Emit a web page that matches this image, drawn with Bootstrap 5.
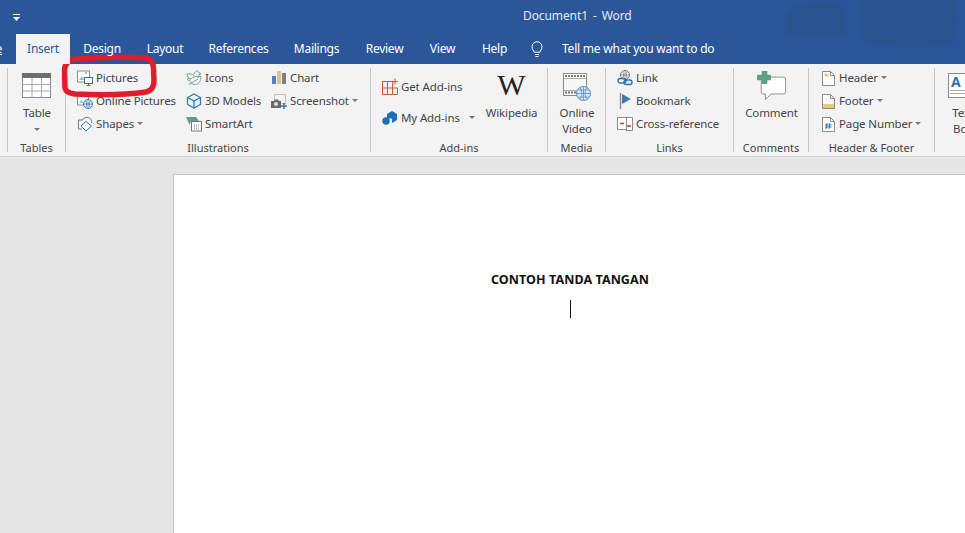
<!DOCTYPE html>
<html lang="en"><head><meta charset="utf-8"><title>Document1 - Word</title>
<link href="https://cdn.jsdelivr.net/npm/bootstrap@5.3.0/dist/css/bootstrap.min.css" rel="stylesheet">
<style>
html,body{height:100%;overflow:hidden}
body{font-family:"Noto Sans","Open Sans",sans-serif;font-size:11.5px;letter-spacing:-.13px;color:#444;background:#e6e6e6}
.wd-app{width:965px;height:533px}
.wd-title{height:34px;background:#2b579a;color:#e4e9f2;position:relative}
.wd-blot{right:0;top:0;width:190px;height:64px;z-index:1;filter:blur(2px)}
.wd-qat{width:33px;height:34px}
.wd-doc-name{margin-left:490px;line-height:31px;font-size:12px;word-spacing:2px;letter-spacing:-.1px;white-space:nowrap}
.wd-tabs{height:30px;flex-wrap:nowrap;position:relative;z-index:2}
.wd-tabbar{background:#2b579a}
.wd-tab{display:block;padding:0;text-align:center;line-height:30px;color:#fff;white-space:nowrap;font-size:12px;letter-spacing:-.25px}
.wd-tab:hover{color:#fff}
.wd-tab.active{background:#f3f3f3;color:#2b579a}
.t-home{width:16px;display:flex;justify-content:flex-end;padding-right:14px}
.t-ins{width:54px}.t-des{width:64px}.t-lay{width:62px}.t-ref{width:85px}.t-mai{width:71px}.t-rev{width:65px}.t-vie{width:51px}.t-hel{width:53px}
.t-tell{margin-left:8px;gap:17px;line-height:30px;color:#fff;white-space:nowrap;font-size:12px;letter-spacing:-.22px}
.wd-ribbon{height:92px;background:#f3f3f3;flex-wrap:nowrap}
.rb-group{height:92px;position:relative;flex:none}
.rb-group::after{content:"";position:absolute;right:0;top:4px;bottom:4px;width:1px;background:#c6c6c6}
.rb-group:last-child::after{display:none}
.g0{width:8px}.g1{width:58px}.g2{width:305px}.g3{width:177px}.g4{width:58px}.g5{width:128px}.g6{width:75px}.g7{width:126px}.g8{width:56px}
.rb-body{height:76px;padding-top:2px}
.rb-label{height:16px;line-height:16px;text-align:center;white-space:nowrap;padding-right:1px;font-size:11px;letter-spacing:0}
.pl-rb{padding-left:11px}.pl-hf{padding-left:13px}
.rb-row{height:23px;gap:3px;white-space:nowrap}
.pl-hf .rb-row{gap:4px}
.rb-row svg{flex:none}
.rb-tall{height:31px}
.rb-pad5{padding-top:5px}
.c1{width:109px}.c2{width:85px}.c3{width:103px}.c4{width:53px}
.rb-big{text-align:center;line-height:16px;white-space:nowrap}
.rb-bigicon{height:39px}
.rb-caret{display:inline-block;width:0;height:0;border:3px solid transparent;border-top-color:#777;border-bottom:0;margin-left:3px;flex:none}
.rb-caret-my{margin-left:9px}
.rb-caret-table{margin:7px 0 0}
.rb-wiki{font-family:"Liberation Serif",serif;font-size:30px;line-height:38px;color:#222;letter-spacing:0}
.wd-sub{height:18px;background:#e6e6e6;border-top:1px solid #d2d2d2}
.wd-canvas{height:359px;padding-left:173px;background:#e6e6e6}
.wd-page{width:793px;height:100%;background:#fff;border:1px solid #c8c8c8;border-width:1px 0 0 1px;flex:none;padding-top:96px;text-align:center;color:#111}
.wd-heading{font-weight:700;font-size:12.5px;line-height:18px;margin:0;letter-spacing:.08px}
.wd-cursor{width:1px;height:18px;background:#111;margin:11px auto 0 396px}
.wd-mark{left:60px;top:54px;width:100px;height:46px;pointer-events:none}
</style></head><body>
<div class="wd-app position-relative overflow-hidden">
<header class="wd-title d-flex">
 <div class="wd-qat d-flex align-items-center justify-content-center"><svg width="7" height="7" viewBox="0 0 7 7"><path d="M0 0.5H7" stroke="#fff"/><path d="M0 3H7L3.5 7Z" fill="#fff"/></svg></div>
 <div class="wd-doc-name">Document1 - Word</div>
</header>
<div class="wd-tabbar">
<nav class="nav wd-tabs">
 <a class="wd-tab t-home" href="#">Home</a>
 <a class="nav-link wd-tab t-ins active" href="#">Insert</a>
 <a class="nav-link wd-tab t-des" href="#">Design</a>
 <a class="nav-link wd-tab t-lay" href="#">Layout</a>
 <a class="nav-link wd-tab t-ref" href="#">References</a>
 <a class="nav-link wd-tab t-mai" href="#">Mailings</a>
 <a class="nav-link wd-tab t-rev" href="#">Review</a>
 <a class="nav-link wd-tab t-vie" href="#">View</a>
 <a class="nav-link wd-tab t-hel" href="#">Help</a>
 <div class="t-tell d-flex align-items-center"><svg width="16" height="18" viewBox="0 0 16 18" fill="none" stroke="#fff"><path d="M5.2 12.2C4.8 10.5 3 9.600 3 6.800a5 5 0 0 1 10 0c0 2.800-1.800 3.700-2.200 5.400Z"/><path d="M6 14.500h4M6.500 16.500h3"/></svg><span>Tell me what you want to do</span></div>
</nav>
</div>
<svg class="wd-blot position-absolute" viewBox="0 0 190 64"><path d="M12 12 Q30 0 60 3 Q74 4 70 34 L10 36 Z M85 0 H176 Q186 16 178 44 Q130 52 88 42 Z" fill="#29548f"/></svg>
<section class="wd-ribbon d-flex position-relative">
 <div class="rb-group g0"></div>
 <div class="rb-group g1">
  <div class="rb-body d-flex flex-column align-items-center">
   <div class="rb-bigicon d-flex align-items-center"><svg width="30" height="26" viewBox="0 0 30 26"><rect x=".5" y=".5" width="28" height="24" fill="#fff" stroke="#8a8a8a"/><rect x="0" y="0" width="29" height="5" fill="#6f6f6f"/><path d="M0 11.500H29M0 18H29M10 5V25M19.500 5V25" stroke="#a8a8a8"/></svg></div>
   <div class="rb-big">Table</div>
   <span class="rb-caret rb-caret-table"></span>
  </div>
  <div class="rb-label">Tables</div>
 </div>
 <div class="rb-group g2">
  <div class="rb-body pl-rb d-flex">
   <div class="c1">
    <div class="rb-row d-flex align-items-center"><svg width="16" height="16" viewBox="0 0 16 16"><rect x=".5" y="1" width="12" height="11" fill="#fff" stroke="#8a8a8a"/><path d="M2 10 5 6l3 4Z" fill="#a9bccb"/><rect x="8" y="2" width="2" height="2" fill="#e8b27a"/><rect x="7.500" y="7.500" width="8" height="6" fill="#fff" stroke="#2e75b6"/><path d="M9.500 15.500h4M11.500 13.500v2" stroke="#2e75b6"/></svg><span>Pictures</span></div>
    <div class="rb-row d-flex align-items-center"><svg width="16" height="16" viewBox="0 0 16 16"><rect x=".5" y="1" width="11" height="11" fill="#fff" stroke="#8a8a8a"/><path d="M2 10 4 7l3 3Z" fill="#a9bccb"/><circle cx="11" cy="11" r="4.500" fill="#fff" stroke="#2e75b6"/><path d="M6.500 11h9M11 6.500v9M8.500 7.500c1.500 2 1.500 5 0 7M13.500 7.500c-1.500 2-1.500 5 0 7" stroke="#2e75b6" stroke-width=".8" fill="none"/></svg><span>Online Pictures</span></div>
    <div class="rb-row d-flex align-items-center"><svg width="16" height="16" viewBox="0 0 16 16" fill="none"><path d="M5 4H1.500v9H5" stroke="#777"/><path d="M5 4.500C6 2 9 1 11.500 1.500c2.500 1 3.500 3 3 5.500" stroke="#777"/><path d="M9 5.500 14.500 10 9 15 4 10Z" fill="#fff" stroke="#2e75b6"/></svg><span class="d-flex align-items-center">Shapes<i class="rb-caret"></i></span></div>
   </div>
   <div class="c2">
    <div class="rb-row d-flex align-items-center"><svg width="16" height="16" viewBox="0 0 16 16" fill="none" stroke="#8496a3"><path d="M8 4.500C8.500 2 10 .5 11.500 1c1 .3 1.500 1 1.500 2l2 .8-2 .7c0 1.500-.5 2.500-1.500 3.500"/><path d="M8 6C6 3.500 3.500 3.500 1 4c0 2 1 4 3.500 5"/><path d="M1 9.500c1-1 2.500-1.200 4-.5 2-2.500 5.500-3 10-2.500 0 4-1.500 7.500-5.500 8-2.500.2-4.500-1-5.500-3.500Z" stroke="#7ba596"/><path d="M3 14.500C6 13 9 10.500 12 9" stroke="#7ba596"/></svg><span>Icons</span></div>
    <div class="rb-row d-flex align-items-center"><svg width="16" height="16" viewBox="0 0 16 16" fill="#eaf2f9" stroke="#2e75b6" stroke-width="1.200"><path d="M8 1 14.500 4.500v7L8 15 1.500 11.500v-7Z"/><path d="M1.500 4.500 8 8l6.500-3.500M8 8v7" fill="none"/></svg><span>3D Models</span></div>
    <div class="rb-row d-flex align-items-center"><svg width="16" height="16" viewBox="0 0 16 16"><path d="M0 1H10L13 5H5L3.500 9Z" fill="#5f9e8f"/><rect x="5.500" y="5.500" width="10" height="9.500" fill="#fff" stroke="#777"/><path d="M8 9h5M8 11h5M8 13h5" stroke="#888" stroke-dasharray="1 1"/></svg><span>SmartArt</span></div>
   </div>
   <div>
    <div class="rb-row d-flex align-items-center"><svg width="16" height="16" viewBox="0 0 16 16"><rect x="1" y="6" width="4" height="8" fill="#4f81bd"/><rect x="6" y="1" width="4" height="13" fill="#e3bd8c"/><rect x="11" y="3" width="4" height="11" fill="#7f7f7f"/></svg><span>Chart</span></div>
    <div class="rb-row d-flex align-items-center"><svg width="16" height="16" viewBox="0 0 16 16"><rect x="3.500" y="1.500" width="11" height="9" fill="none" stroke="#8a8a8a" stroke-dasharray="1 1"/><path d="M0 8h3l1-1.500h3L8 8h2v7H0Z" fill="#6a6a6a"/><circle cx="5" cy="11" r="2" fill="#ddd"/><path d="M13 10v6M10 13h6" stroke="#2e75b6" stroke-width="1.600"/></svg><span class="d-flex align-items-center">Screenshot<i class="rb-caret"></i></span></div>
   </div>
  </div>
  <div class="rb-label">Illustrations</div>
 </div>
 <div class="rb-group g3">
  <div class="rb-body pl-rb d-flex">
   <div class="c3 rb-pad5">
    <div class="rb-row rb-tall d-flex align-items-center"><svg width="16" height="17" viewBox="0 0 16 17" fill="none" stroke="#c55a2e"><path d="M.5 3.500h10v13H.5ZM.5 10h15v6.500h-5M5.500 3.500v13M10.500 10v-6.500"/><path d="M13 .5v6M10 3.500h6" stroke-width="1"/></svg><span>Get Add-ins</span></div>
    <div class="rb-row rb-tall d-flex align-items-center"><svg width="16" height="16" viewBox="0 0 16 16"><path d="M5 4 10 1l5 3v6l-5 3V8.500H5Z" fill="#1b6fb5"/><circle cx="4" cy="11" r="3.700" fill="#1b6fb5"/></svg><span class="d-flex align-items-center">My Add-ins<i class="rb-caret rb-caret-my"></i></span></div>
   </div>
   <div class="c4 d-flex flex-column align-items-center">
    <div class="rb-bigicon rb-wiki">W</div>
    <div class="rb-big">Wikipedia</div>
   </div>
  </div>
  <div class="rb-label">Add-ins</div>
 </div>
 <div class="rb-group g4">
  <div class="rb-body d-flex flex-column align-items-center">
   <div class="rb-bigicon d-flex align-items-center"><svg width="28" height="33" viewBox="0 -2 28 33"><rect x=".5" y="2.500" width="23" height="22" fill="#f7f7f7" stroke="#8a8a8a"/><rect x="1" y="3" width="22" height="4" fill="#fff"/><path d="M2 5h21M2 21.500h12" stroke="#777" stroke-width="2" stroke-dasharray="2 1"/><path d="M.5 7.500h23M.5 19.500h14" stroke="#aaa"/><circle cx="20.500" cy="22.500" r="7" fill="#dbe8f4" stroke="#5b8fc0"/><path d="M13.500 22.500h14M20.500 15.500v14M17 16.500c2.500 3.500 2.500 8.500 0 12M24 16.500c-2.500 3.500-2.500 8.500 0 12M15 19h11M15 26h11" stroke="#5b8fc0" fill="none" stroke-width=".8"/></svg></div>
   <div class="rb-big">Online<br>Video</div>
  </div>
  <div class="rb-label">Media</div>
 </div>
 <div class="rb-group g5">
  <div class="rb-body pl-rb">
   <div class="rb-row d-flex align-items-center"><svg width="16" height="16" viewBox="0 0 16 16" fill="none"><circle cx="8" cy="5" r="4.500" fill="#f5f5f5" stroke="#777"/><path d="M3.500 5h9M8 .5v9M5.500 1.500c1.500 2 1.500 5 0 7M10.500 1.500c-1.500 2-1.500 5 0 7" stroke="#777" stroke-width=".7"/><rect x="1" y="8.500" width="8" height="4.500" rx="2.200" stroke="#2e75b6" stroke-width="1.400"/><rect x="7" y="10" width="8" height="4.500" rx="2.200" stroke="#2e75b6" stroke-width="1.400"/></svg><span>Link</span></div>
   <div class="rb-row d-flex align-items-center"><svg width="16" height="16" viewBox="0 0 16 16"><path d="M3.500 0v16" stroke="#8a8a8a" stroke-width="1.400"/><path d="M5 1 14 6 5 11Z" fill="#3d7ab8"/></svg><span>Bookmark</span></div>
   <div class="rb-row d-flex align-items-center"><svg width="16" height="16" viewBox="0 0 16 16" fill="none"><path d="M10 1.500h5.500v13H9" stroke="#8a8a8a" fill="#fff"/><rect x=".5" y="1.500" width="9" height="12" fill="#fff" stroke="#8a8a8a"/><path d="M3 7.500h4M10 10h4" stroke="#c0392b" stroke-width="1.400"/></svg><span>Cross-reference</span></div>
  </div>
  <div class="rb-label">Links</div>
 </div>
 <div class="rb-group g6">
  <div class="rb-body d-flex flex-column align-items-center">
   <div class="rb-bigicon d-flex align-items-center"><svg width="30" height="29" viewBox="0 0 32 31"><path d="M4.500 6.500h24a2 2 0 0 1 2 2v14a2 2 0 0 1-2 2H15l-6 6v-6H6.500a2 2 0 0 1-2-2Z" fill="#fff" stroke="#8a8a8a"/><path d="M5 0h6v4h4v6h-4v4H5v-4H0V4h5Z" fill="#5fa08c"/></svg></div>
   <div class="rb-big">Comment</div>
  </div>
  <div class="rb-label">Comments</div>
 </div>
 <div class="rb-group g7">
  <div class="rb-body pl-hf">
   <div class="rb-row d-flex align-items-center"><svg width="13" height="16" viewBox="0 0 13 16"><path d="M.5 1.500h8l4 4v10H.5Z" fill="#fff" stroke="#8a8a8a"/><path d="M8.500 1.500v4h4" fill="none" stroke="#8a8a8a"/><rect x="2.500" y="3.500" width="4" height="3" fill="#e9c77b"/></svg><span class="d-flex align-items-center">Header<i class="rb-caret"></i></span></div>
   <div class="rb-row d-flex align-items-center"><svg width="13" height="16" viewBox="0 0 13 16"><path d="M.5 1.500h8l4 4v10H.5Z" fill="#fff" stroke="#8a8a8a"/><path d="M8.500 1.500v4h4" fill="none" stroke="#8a8a8a"/><rect x="1" y="11" width="11" height="4" fill="#e9c77b"/></svg><span class="d-flex align-items-center">Footer<i class="rb-caret"></i></span></div>
   <div class="rb-row d-flex align-items-center"><svg width="13" height="16" viewBox="0 0 13 16"><path d="M.5 1.500h8l4 4v10H.5Z" fill="#fff" stroke="#8a8a8a"/><path d="M8.500 1.500v4h4" fill="none" stroke="#8a8a8a"/><path d="M5 7 4 13M8 7 7 13M3 9h6.500M3 11h6.500" stroke="#2e75b6"/></svg><span class="d-flex align-items-center">Page Number<i class="rb-caret"></i></span></div>
  </div>
  <div class="rb-label">Header &amp; Footer</div>
 </div>
 <div class="rb-group g8">
  <div class="rb-body d-flex flex-column align-items-center">
   <div class="rb-bigicon d-flex align-items-center"><svg width="30" height="26" viewBox="0 0 30 26"><rect x=".5" y=".5" width="29" height="24" fill="#fff" stroke="#8a8a8a"/><text x="3" y="14" font-size="14" font-weight="700" fill="#2e75b6">A</text><path d="M2 17.500h26M2 20.500h26" stroke="#aaa"/></svg></div>
   <div class="rb-big">Text<br>Box</div>
  </div>
 </div>
</section>
<div class="wd-sub"></div>
<main class="wd-canvas d-flex">
 <div class="wd-page">
  <h1 class="wd-heading">CONTOH TANDA TANGAN</h1>
  <div class="wd-cursor"></div>
 </div>
</main>
<svg class="wd-mark position-absolute" viewBox="0 0 100 46" fill="none"><path d="M16 5 C40 3 70 3 85 4 Q93 5 93.500 14 L94 27 Q94 36 86 38 C65 41 35 41 15 40 Q6 39 5 34 L4.500 16 Q5 6 16 5Z" stroke="#e01e2b" stroke-width="5.500"/></svg>
</div>
</body></html>
